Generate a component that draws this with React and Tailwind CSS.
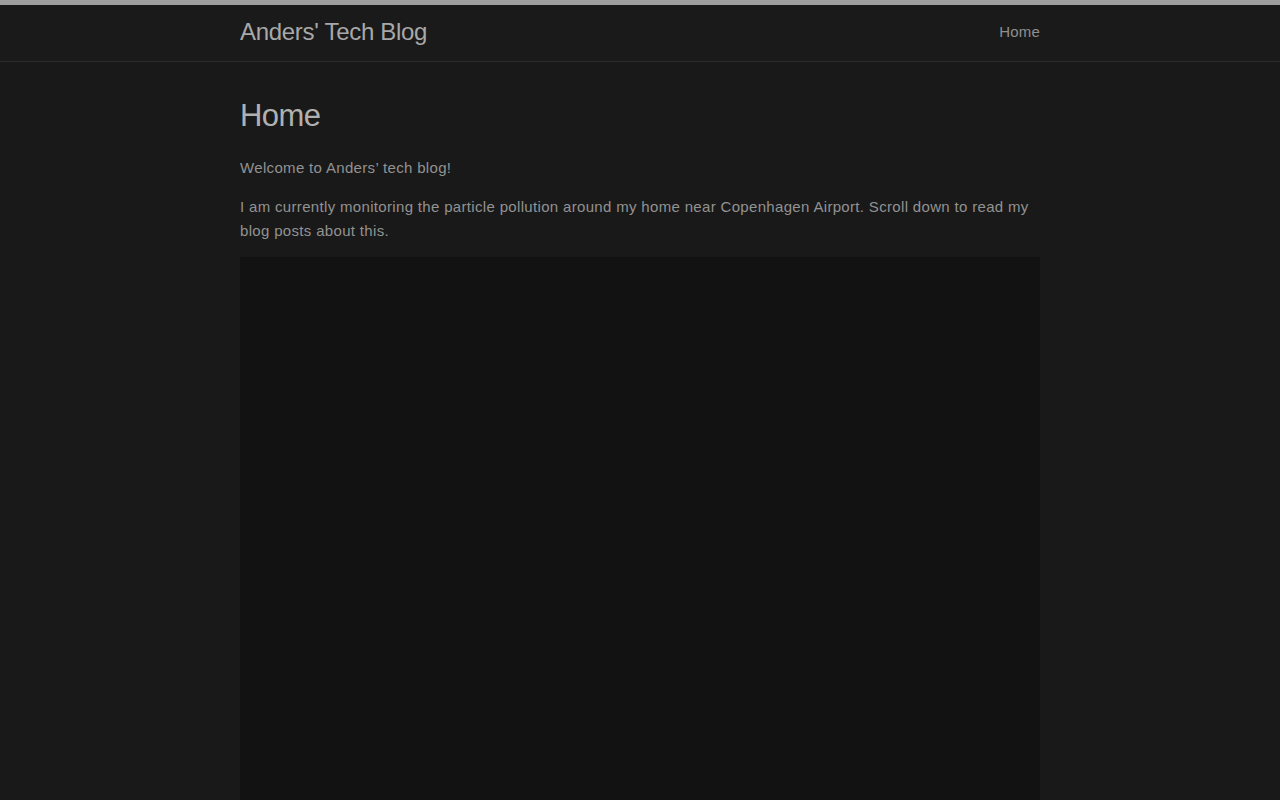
export default function App() {
  return (
    <div className="min-h-[800px] bg-[#191919] border-t-[5px] border-[#9e9e9e]" style={{ fontFamily: '"Liberation Sans", Arial, sans-serif' }}>
      <header className="border-b border-[#2b2b2b] bg-[#1a1a1a]">
        <div className="mx-auto w-[800px] h-[56px] pb-[2px] flex items-center justify-between">
          <div className="text-[24px] text-[#a8a8a8] tracking-[-0.3px]">Anders' Tech Blog</div>
          <nav className="text-[15px] text-[#8f8f8f] tracking-[0.2px]">Home</nav>
        </div>
      </header>
      <main className="mx-auto w-[800px] pt-[34px]">
        <h1 className="text-[31px] leading-[40px] text-[#b0b0b0] tracking-[-0.6px] mb-[20px]">Home</h1>
        <p className="text-[15px] leading-[24px] text-[#929292] tracking-[0.33px] mb-[15px]">Welcome to Anders’ tech blog!</p>
        <p className="text-[15px] leading-[24px] text-[#929292] tracking-[0.33px] mb-[14px]">I am currently monitoring the particle pollution around my home near Copenhagen Airport. Scroll down to read my blog posts about this.</p>
        <div className="h-[600px] bg-[#121212]"></div>
      </main>
    </div>
  );
}
